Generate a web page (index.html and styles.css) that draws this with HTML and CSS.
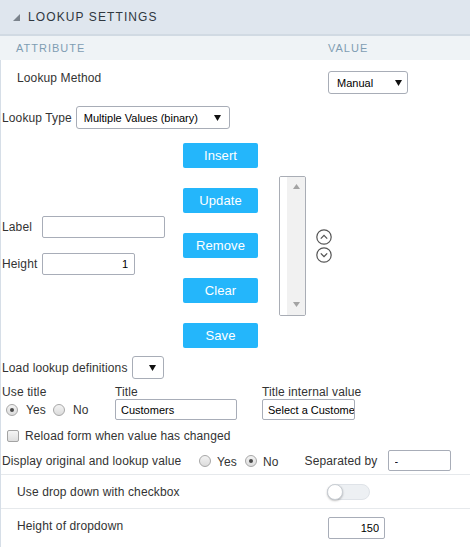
FILE: index.html
```html
<!DOCTYPE html>
<html>
<head>
<meta charset="utf-8">
<link rel="stylesheet" href="styles.css">
</head>
<body>
<div class="panel">
  <div class="header">
    <svg class="tri" width="7" height="7" viewBox="0 0 7 7"><polygon points="7,0 7,7 0,7" fill="#7b838c"/></svg>
    <span class="title">LOOKUP SETTINGS</span>
  </div>
  <div class="colhead">
    <div class="c-attr">ATTRIBUTE</div>
    <div class="c-val">VALUE</div>
  </div>
  <div class="content">
    <div class="row row-method">
      <div class="attr">Lookup Method</div>
      <div class="val">
        <div class="select sel-manual"><span>Manual</span><svg class="caret" width="7" height="6" viewBox="0 0 7 6"><polygon points="0,0 7,0 3.5,6" fill="#111"/></svg></div>
      </div>
    </div>

    <div class="lookup">
      <div class="line l-type">
        <span>Lookup Type</span>
        <div class="select sel-type"><span>Multiple Values (binary)</span><svg class="caret" width="7" height="6" viewBox="0 0 7 6"><polygon points="0,0 7,0 3.5,6" fill="#111"/></svg></div>
      </div>

      <div class="mid">
        <div class="fields">
          <div class="field"><span class="flabel">Label</span><input class="input in-label" type="text" value=""></div>
          <div class="field"><span class="flabel">Height</span><input class="input in-height" type="text" value="1"></div>
        </div>
        <div class="buttons">
          <div class="btn">Insert</div>
          <div class="btn">Update</div>
          <div class="btn">Remove</div>
          <div class="btn">Clear</div>
          <div class="btn">Save</div>
        </div>
        <div class="listbox">
          <div class="lb-area"></div>
          <div class="lb-scroll">
            <svg width="7" height="5" viewBox="0 0 7 5"><polygon points="0,5 7,5 3.5,0" fill="#a3a3a3"/></svg>
            <svg width="7" height="5" viewBox="0 0 7 5"><polygon points="0,0 7,0 3.5,5" fill="#a3a3a3"/></svg>
          </div>
        </div>
        <div class="arrows">
          <svg width="16" height="16" viewBox="0 0 16 16"><circle cx="8" cy="8" r="7.2" fill="none" stroke="#555" stroke-width="1.2"/><polyline points="4.8,9.6 8,6.4 11.2,9.6" fill="none" stroke="#555" stroke-width="1.3"/></svg>
          <svg width="16" height="16" viewBox="0 0 16 16"><circle cx="8" cy="8" r="7.2" fill="none" stroke="#555" stroke-width="1.2"/><polyline points="4.8,6.4 8,9.6 11.2,6.4" fill="none" stroke="#555" stroke-width="1.3"/></svg>
        </div>
      </div>

      <div class="line l-load">
        <span>Load lookup definitions</span>
        <div class="select sel-load"><svg class="caret" width="7" height="6" viewBox="0 0 7 6"><polygon points="0,0 7,0 3.5,6" fill="#111"/></svg></div>
      </div>

      <div class="titles">
        <div class="tcol t1">
          <div class="tlabel">Use title</div>
          <div class="radios">
            <span class="radio on"></span><span class="rlabel">Yes</span>
            <span class="radio r2"></span><span class="rlabel">No</span>
          </div>
        </div>
        <div class="tcol t2">
          <div class="tlabel">Title</div>
          <input class="input in-title" type="text" value="Customers">
        </div>
        <div class="tcol t3">
          <div class="tlabel">Title internal value</div>
          <input class="input in-tiv" type="text" value="Select a Customer">
        </div>
      </div>

      <div class="line l-reload">
        <span class="check"></span>
        <span>Reload form when value has changed</span>
      </div>

      <div class="line l-display">
        <span class="dlabel">Display original and lookup value</span>
        <span class="radio"></span><span class="rlabel low">Yes</span>
        <span class="radio on r2"></span><span class="rlabel low">No</span>
        <span class="seplabel">Separated by</span>
        <input class="input in-sep" type="text" value="-">
      </div>
    </div>

    <div class="row row-dd">
      <div class="attr">Use drop down with checkbox</div>
      <div class="val"><div class="toggle"><span class="knob"></span></div></div>
    </div>
    <div class="row row-h">
      <div class="attr">Height of dropdown</div>
      <div class="val"><input class="input in-hdd" type="text" value="150"></div>
    </div>
  </div>
</div>
</body>
</html>
```

FILE: styles.css
```css
html, body {
  margin: 0;
  padding: 0;
  background: #fff;
}
body {
  width: 470px;
  height: 547px;
  overflow: hidden;
  font-family: "Liberation Sans", Arial, sans-serif;
  font-size: 12px;
  line-height: 14px;
  letter-spacing: 0.12px;
  color: #333;
}
.panel {
  width: 470px;
}
.header {
  height: 34px;
  background: #dfe6ee;
  border-bottom: 2px solid #d1dae3;
  display: flex;
  align-items: center;
  padding-left: 13px;
  box-sizing: content-box;
}
.tri {
  display: block;
  margin-top: 1px;
}
.title {
  margin-left: 8px;
  font-size: 12px;
  letter-spacing: 1.1px;
  color: #2f3740;
}
.colhead {
  height: 24px;
  background: #eff3f6;
  display: grid;
  grid-template-columns: 328px 1fr;
  align-items: center;
  font-size: 11px;
  letter-spacing: 1px;
  color: #7f9db3;
}
.c-attr {
  padding-left: 16px;
}
.content {
  border-left: 1px solid #d6dee7;
  height: 487px;
}
.row {
  display: grid;
  grid-template-columns: 327px 1fr;
}
.row .attr {
  padding-left: 16px;
}
.row-method {
  height: 40px;
}
.row-method .attr {
  padding-top: 11px;
}
.row-method .val {
  padding-top: 11px;
}
.select {
  box-sizing: border-box;
  height: 23px;
  border: 1px solid #a8adb7;
  border-radius: 3px;
  background: #fff;
  display: flex;
  align-items: center;
  justify-content: space-between;
  font-size: 11px;
  letter-spacing: 0;
  color: #000;
}
.select .caret {
  display: block;
}
.sel-manual {
  width: 80px;
  padding: 0 5px 0 8px;
}
.lookup {
  padding-left: 1px;
  padding-bottom: 3px;
}
.line {
  display: flex;
  align-items: center;
}
.l-type {
  margin-top: 6px;
  height: 23px;
}
.sel-type {
  width: 154px;
  margin-left: 4px;
  padding: 0 8px 0 7px;
}
.mid {
  margin-top: 14px;
  display: flex;
  align-items: center;
  height: 205px;
}
.fields {
  width: 181px;
  display: flex;
  flex-direction: column;
  gap: 15px;
}
.field {
  display: flex;
  align-items: center;
}
.flabel {
  width: 40px;
}
.input {
  box-sizing: border-box;
  height: 21px;
  border: 1px solid #a8adb8;
  border-radius: 2px;
  padding: 0 5px;
  margin: 0;
  font-family: "Liberation Sans", Arial, sans-serif;
  font-size: 11px;
  letter-spacing: 0;
  color: #000;
  background: #fff;
  outline: none;
}
.in-label {
  width: 123px;
  height: 22px;
}
.in-height {
  width: 93px;
  height: 22px;
  text-align: right;
  padding-right: 6px;
}
.buttons {
  display: flex;
  flex-direction: column;
  gap: 20px;
  width: 75px;
}
.btn {
  height: 25px;
  background: #24b6fb;
  border-radius: 2px;
  color: #fff;
  font-size: 13px;
  letter-spacing: 0.1px;
  display: flex;
  align-items: center;
  justify-content: center;
}
.listbox {
  margin-left: 21px;
  width: 27px;
  height: 140px;
  box-sizing: border-box;
  border: 1px solid #a9adb5;
  border-radius: 2px;
  display: flex;
  overflow: hidden;
}
.lb-area {
  width: 7px;
  background: #fff;
}
.lb-scroll {
  flex: 1;
  background: #f1f1f1;
  display: flex;
  flex-direction: column;
  align-items: center;
  justify-content: space-between;
  padding: 7px 0 8px;
}
.lb-scroll svg {
  display: block;
}
.arrows {
  margin-left: 10px;
  display: flex;
  flex-direction: column;
  gap: 2px;
}
.arrows svg {
  display: block;
}
.l-load {
  margin-top: 8px;
  height: 23px;
}
.sel-load {
  width: 32px;
  margin-left: 4px;
  justify-content: flex-end;
  padding-right: 7px;
}
.titles {
  margin-top: 6px;
  display: flex;
}
.tlabel {
  height: 14px;
}
.t1 {
  width: 113px;
}
.t2 {
  width: 147px;
}
.radios {
  height: 21px;
  display: flex;
  align-items: center;
}
.radio {
  box-sizing: border-box;
  width: 12px;
  height: 12px;
  border-radius: 50%;
  border: 1px solid #a7a7a7;
  background: linear-gradient(#f3f3f3, #dcdcdc);
  position: relative;
  flex: none;
}
.radio.on::after {
  content: "";
  position: absolute;
  left: 3px;
  top: 3px;
  width: 4px;
  height: 4px;
  border-radius: 50%;
  background: #4a4a4a;
}
.radios .radio:first-child {
  margin-left: 4px;
}
.rlabel {
  margin-left: 8px;
}
.radios .r2 {
  margin-left: 7px;
}
.in-title {
  width: 122px;
}
.in-tiv {
  width: 93px;
  padding-right: 0;
}
.l-reload {
  margin-top: 8px;
  height: 16px;
}
.check {
  box-sizing: border-box;
  width: 12px;
  height: 12px;
  margin-left: 5px;
  margin-right: 6px;
  border: 1px solid #a3a3a3;
  border-radius: 2px;
  background: linear-gradient(#f5f5f5, #dedede);
}
.l-display {
  margin-top: 6px;
  height: 21px;
}
.dlabel {
  width: 197px;
  flex: none;
}
.l-display .rlabel {
  margin-left: 6px;
}
.l-display .r2 {
  margin-left: 8px;
}
.low {
  padding-top: 2px;
}
.seplabel {
  margin-left: 26px;
  width: 83px;
}
.in-sep {
  width: 63px;
  padding-left: 6px;
}
.row-dd {
  border-top: 1px solid #e6e9ec;
  height: 33px;
}
.row-dd .attr {
  padding-top: 10px;
}
.row-dd .val {
  padding-top: 9px;
}
.toggle {
  margin-left: -1px;
  width: 43px;
  height: 16px;
  box-sizing: border-box;
  border-radius: 8px;
  background: #edf0f3;
  border: 1px solid #dfe3e8;
  position: relative;
}
.knob {
  position: absolute;
  left: -1px;
  top: -1px;
  width: 16px;
  height: 16px;
  box-sizing: border-box;
  border-radius: 50%;
  background: #fff;
  border: 1px solid #c9ced4;
  box-shadow: 0 1px 2px rgba(0,0,0,0.25);
}
.row-h {
  border-top: 1px solid #e6e9ec;
}
.row-h .attr {
  padding-top: 10px;
}
.row-h .val {
  padding-top: 8px;
}
.in-hdd {
  width: 57px;
  height: 22px;
  text-align: right;
  padding-right: 5px;
}
```
